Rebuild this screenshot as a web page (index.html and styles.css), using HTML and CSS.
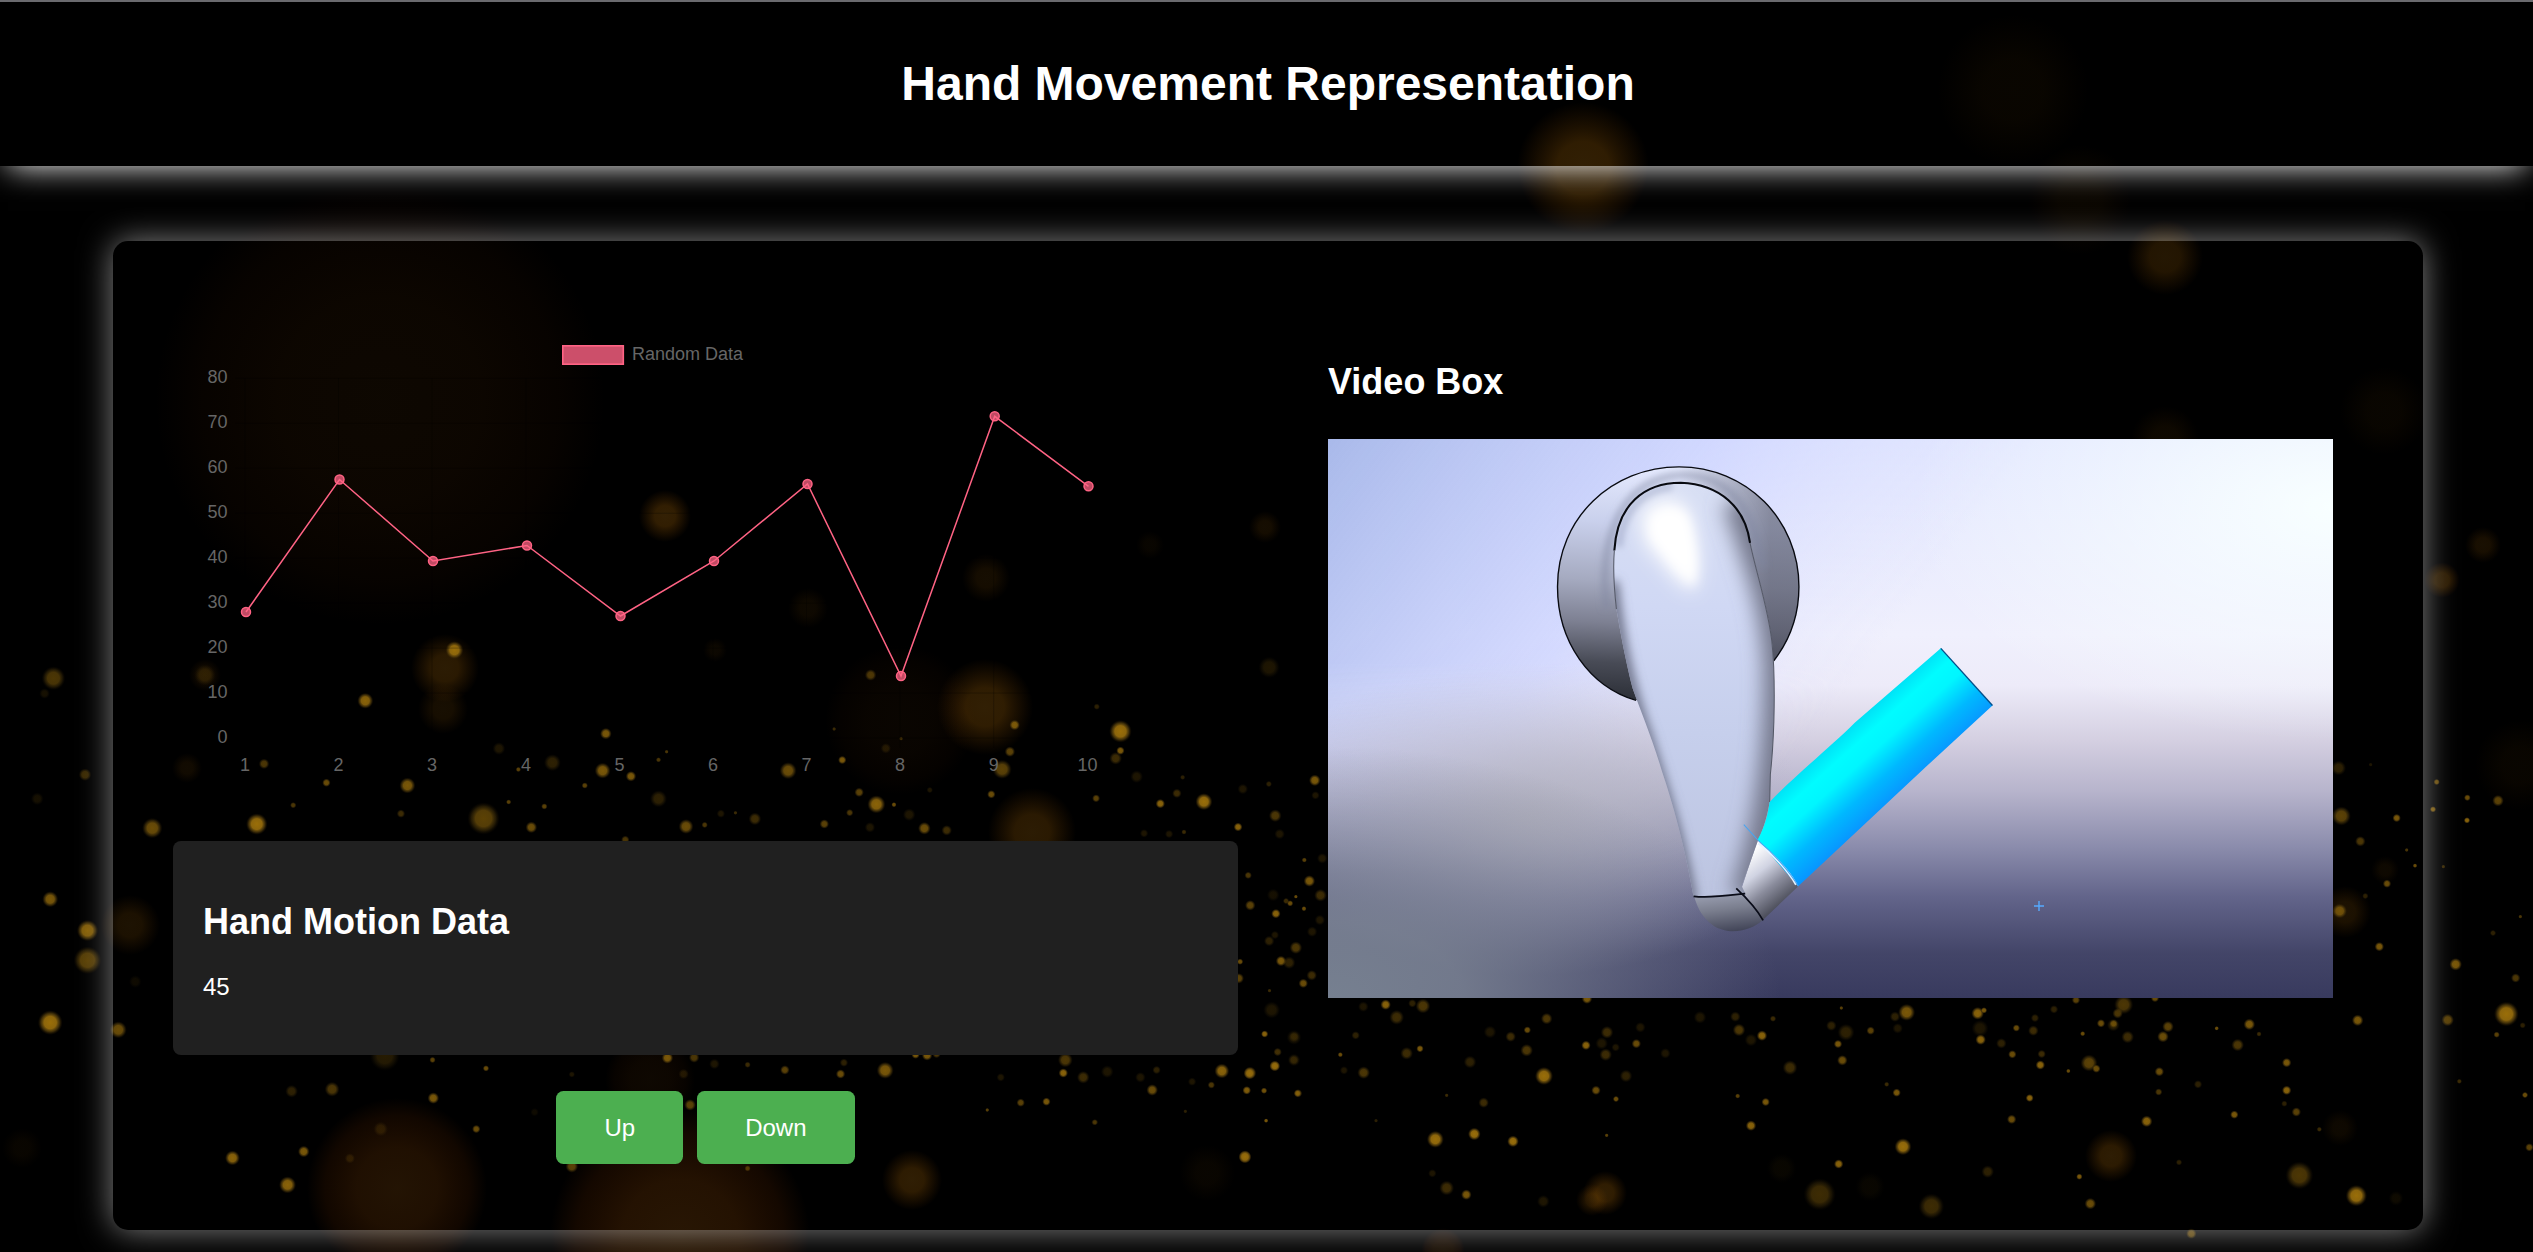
FILE: index.html
```html
<!DOCTYPE html>
<html lang="en">
<head>
<meta charset="utf-8">
<title>Hand Movement Representation</title>
<link rel="stylesheet" href="styles.css">
</head>
<body>
<svg class="bokeh" id="bokeh" viewBox="0 0 2533 1252" aria-hidden="true">
  <defs>
    <radialGradient id="gold"><stop offset="0" stop-color="#9a6e08"/><stop offset=".5" stop-color="#8c650c"/><stop offset=".75" stop-color="#5e450c" stop-opacity=".65"/><stop offset="1" stop-color="#2a1a02" stop-opacity="0"/></radialGradient>
    <radialGradient id="haze"><stop offset="0" stop-color="#b87510"/><stop offset=".4" stop-color="#b87008" stop-opacity=".95"/><stop offset=".7" stop-color="#a86004" stop-opacity=".5"/><stop offset="1" stop-color="#a05000" stop-opacity="0"/></radialGradient>
    <radialGradient id="ember"><stop offset="0" stop-color="#a05a10"/><stop offset=".45" stop-color="#a05008" stop-opacity=".9"/><stop offset=".8" stop-color="#a04000" stop-opacity=".5"/><stop offset="1" stop-color="#a04000" stop-opacity="0"/></radialGradient>
  </defs>
</svg>
<header class="header"><h1>Hand Movement Representation</h1></header>
<main class="container">
  <section class="left">
    <svg class="chart" id="chart" viewBox="173 323 1064 482">
      <g id="grid" stroke="#000" stroke-opacity=".25"></g>
      <rect x="562.8" y="345.8" width="60.5" height="18.4" fill="#ff6384" fill-opacity=".8" stroke="#ff6384" stroke-width="1.6"/>
      <text x="632" y="360">Random Data</text>
    </svg>
    <div class="data-box">
      <h2>Hand Motion Data</h2>
      <p>45</p>
    </div>
    <div class="buttons"><button>Up</button><button>Down</button></div>
  </section>
  <section class="right">
    <h2>Video Box</h2>
    <svg class="video" viewBox="1328 439 1005 559" preserveAspectRatio="none">
      <defs>
        <linearGradient id="sky" x1="0" y1="0" x2="0" y2="1"><stop offset="0" stop-color="#e2e7ff"/><stop offset=".35" stop-color="#f0f0fd"/><stop offset=".44" stop-color="#edebf9"/><stop offset=".54" stop-color="#d4cfe1"/><stop offset=".63" stop-color="#b7b4cc"/><stop offset=".73" stop-color="#8b8cac"/><stop offset=".82" stop-color="#62648a"/><stop offset=".92" stop-color="#434568"/><stop offset="1" stop-color="#383a5e"/></linearGradient>
        <linearGradient id="blue" x1="0" y1="0" x2=".6" y2=".25"><stop offset="0" stop-color="#a9b9ea"/><stop offset=".55" stop-color="#ccd3ff" stop-opacity=".75"/><stop offset="1" stop-color="#dfe2ff" stop-opacity="0"/></linearGradient>
        <linearGradient id="fade" x1="0" y1="0" x2="0" y2="1"><stop offset="0" stop-color="#fff"/><stop offset=".4" stop-color="#fff"/><stop offset=".78" stop-color="#000"/></linearGradient>
        <mask id="top"><rect x="1328" y="439" width="1005" height="559" fill="url(#fade)"/></mask>
        <radialGradient id="white" cx="1" cy=".12" r=".42"><stop offset="0" stop-color="#f8ffff"/><stop offset="1" stop-color="#f8ffff" stop-opacity="0"/></radialGradient>
        <radialGradient id="gray" cx="0" cy="1" r=".45"><stop offset="0" stop-color="#768090"/><stop offset=".3" stop-color="#7b8393" stop-opacity=".85"/><stop offset="1" stop-color="#7c8096" stop-opacity="0"/></radialGradient>
        <radialGradient id="mist" cx=".2" cy=".68" r=".28"><stop offset="0" stop-color="#b2b2bd" stop-opacity=".85"/><stop offset="1" stop-color="#b6b6c2" stop-opacity="0"/></radialGradient>
        <linearGradient id="disc" x1=".5" y1="0" x2=".45" y2="1"><stop offset="0" stop-color="#e6ebff"/><stop offset=".25" stop-color="#c9d0ec"/><stop offset=".5" stop-color="#a5aac0"/><stop offset=".68" stop-color="#7d8092"/><stop offset=".85" stop-color="#484b56"/><stop offset="1" stop-color="#2d3038"/></linearGradient>
        <linearGradient id="shade" x1="0" y1="0" x2="1" y2="0"><stop offset=".5" stop-color="#4a4c5c" stop-opacity="0"/><stop offset=".88" stop-color="#4a4c5c" stop-opacity=".55"/></linearGradient>
        <linearGradient id="arm" x1="0" y1="0" x2="0" y2="1"><stop offset="0" stop-color="#d8dff4"/><stop offset=".3" stop-color="#d0d8f4"/><stop offset=".6" stop-color="#c6cfec"/><stop offset="1" stop-color="#bcc4e0"/></linearGradient>
        <linearGradient id="cyan" gradientUnits="userSpaceOnUse" x1="960" y1="900" x2="1140" y2="1100"><stop offset="0" stop-color="#00dcf4"/><stop offset=".22" stop-color="#00fcff"/><stop offset=".4" stop-color="#00f6ff"/><stop offset=".68" stop-color="#00b8ff"/><stop offset="1" stop-color="#0a8cff"/></linearGradient>
        <linearGradient id="tipg" gradientUnits="userSpaceOnUse" x1="720" y1="1230" x2="830" y2="1370"><stop offset="0" stop-color="#fff"/><stop offset=".35" stop-color="#d0d3e2"/><stop offset=".65" stop-color="#8a8c9c"/><stop offset="1" stop-color="#4a4c58"/></linearGradient>
        <linearGradient id="ball" x1=".3" y1="0" x2=".5" y2="1"><stop offset="0" stop-color="#a4a9bc"/><stop offset=".5" stop-color="#7a7e8e"/><stop offset="1" stop-color="#44475a"/></linearGradient>
        <filter id="b30" filterUnits="userSpaceOnUse" x="100" y="0" width="900" height="1600"><feGaussianBlur stdDeviation="30"/></filter>
        <filter id="b18" filterUnits="userSpaceOnUse" x="100" y="0" width="900" height="1600"><feGaussianBlur stdDeviation="16"/></filter>
        <filter id="b8" filterUnits="userSpaceOnUse" x="100" y="0" width="900" height="1600"><feGaussianBlur stdDeviation="9"/></filter>
        <clipPath id="armclip"><path d="M332 350C340 215 420 153 525 153C640 158 712 225 726 325C745 420 780 520 790 620C800 720 798 880 785 1000L783 1080C775 1130 760 1170 748 1195L702 1325L712 1345L562 1355C535 1200 500 1080 470 990C440 890 410 820 385 750C360 650 345 560 338 520C330 450 328 400 332 350Z"/></clipPath>
      </defs>
      <rect x="1328" y="439" width="1005" height="559" fill="url(#sky)"/>
      <g mask="url(#top)"><rect x="1328" y="439" width="1005" height="559" fill="url(#blue)"/></g>
      <rect x="1328" y="439" width="1005" height="559" fill="url(#white)"/>
      <rect x="1328" y="439" width="1005" height="559" fill="url(#mist)"/>
      <rect x="1328" y="439" width="1005" height="559" fill="url(#gray)"/>
      <g transform="translate(1500 430) scale(.3444)">
        <path d="M395 785C260 745 167 615 167 455C167 255 325 107 520 107C715 107 868 260 868 455C868 540 840 612 795 670Z" fill="url(#disc)"/>
        <path d="M395 785C260 745 167 615 167 455C167 255 325 107 520 107C715 107 868 260 868 455C868 540 840 612 795 670Z" fill="url(#shade)"/>
        <path d="M310 520C285 340 340 140 530 130C680 135 735 240 765 400" fill="none" stroke="#7e86a0" stroke-opacity=".45" stroke-width="22" filter="url(#b8)"/>
        <path d="M395 785C260 745 167 615 167 455C167 255 325 107 520 107C715 107 868 260 868 455C868 540 840 612 795 670" fill="none" stroke="#080a10" stroke-width="4"/>
        <path d="M562 1350L690 1330L764 1422C720 1462 650 1468 608 1430C580 1405 572 1380 562 1350Z" fill="url(#ball)"/>
        <path d="M748 1190L866 1325L764 1422L700 1335Z" fill="url(#tipg)"/>
        <g clip-path="url(#armclip)">
          <rect x="320" y="150" width="490" height="1215" fill="url(#arm)"/>
          <path d="M700 200C770 400 815 520 820 700C822 900 800 1150 720 1360" fill="none" stroke="#74788c" stroke-width="110" filter="url(#b30)"/>
          <path d="M325 440C345 640 385 780 425 890C475 1050 525 1200 555 1370" fill="none" stroke="#666b80" stroke-width="34" filter="url(#b18)"/>
          <path d="M345 340C355 220 430 175 500 165" fill="none" stroke="#b4bcd8" stroke-width="22" filter="url(#b8)"/>
          <path d="M410 250C440 190 530 180 550 250C575 340 580 400 562 470C520 450 470 380 425 330Z" fill="#fff" filter="url(#b30)"/>
          <path d="M440 260C480 220 540 220 550 270C570 350 575 400 562 455C530 430 480 350 440 310Z" fill="#fff" filter="url(#b18)"/>
        </g>
        <path d="M332 350C340 215 420 153 525 153C640 158 712 225 726 328" fill="none" stroke="#080a10" stroke-width="6"/>
        <path d="M726 328C745 420 780 520 790 620C800 720 798 880 785 1000L783 1080M332 350C328 400 330 450 338 520" fill="none" stroke="#555967" stroke-width="3"/>
        <path d="M783 1080C860 1000 960 920 1030 850L1280 634L1430 800L1240 975L866 1325L748 1190C770 1150 778 1115 783 1080Z" fill="url(#cyan)"/>
        <path d="M1280 634L1430 800" stroke="#04508a" stroke-width="4"/>
        <path d="M750 1200C785 1225 835 1275 860 1320" fill="none" stroke="#e8f4ff" stroke-width="7"/>
        <path d="M708 1146L750 1192C790 1225 840 1280 866 1325" fill="none" stroke="#4aa4f0" stroke-width="3"/>
        <path d="M562 1354C610 1360 660 1352 712 1346M686 1331C715 1358 745 1390 764 1424" fill="none" stroke="#0a0c18" stroke-width="5"/>
      </g>
      <path d="M2034 906H2044M2039 901V911" stroke="#55aaff" stroke-width="1.4"/>
    </svg>
  </section>
</main>
<script src="app.js"></script>
</body>
</html>
```
FILE: styles.css
```css
* { box-sizing: border-box; }
body {
  margin: 0;
  height: 1252px;
  overflow: hidden;
  background: #000;
  color: #fff;
  font-family: Arial, "Liberation Sans", sans-serif;
  font-size: 24px;
}
.bokeh {
  position: absolute;
  inset: 0;
  width: 2533px;
  height: 1252px;
  z-index: -1;
}
.header {
  height: 166px;
  padding-bottom: 2px;
  border-top: 2px solid #6a6a6e;
  display: flex;
  align-items: center;
  justify-content: center;
  box-shadow: 0 8px 30px -8px #fff;
}
.header h1 { margin: 0; padding-left: 3px; font-size: 48px; line-height: 55px; }
h2 { margin: 0; font-size: 36px; line-height: 42px; }
.container {
  width: 2310px;
  height: 989px;
  margin: 75px 0 0 113px;
  padding: 82px 90px 65px 60px;
  display: grid;
  grid-template-columns: 1065px 1005px;
  justify-content: space-between;
  border-radius: 15px;
  box-shadow: 0 0 33px rgba(255, 255, 255, .52);
}
.left { display: flex; flex-direction: column; }
.chart { display: block; width: 1064px; height: 482px; }
.chart text { font-size: 18px; fill: #666; }
.data-box {
  height: 214px;
  margin-top: 36px;
  padding: 60px 30px 0;
  border-radius: 8px;
  background: #202020;
}
.data-box p { margin: 30px 0 0; line-height: 28px; }
.buttons {
  display: flex;
  justify-content: center;
  gap: 14px;
  margin-top: 36px;
}
button {
  height: 73px;
  padding: 0 48px;
  border: 0;
  border-radius: 7.5px;
  background: #4caf50;
  color: #fff;
  font: inherit;
}
.right { padding-top: 38px; }
.video { display: block; width: 1005px; height: 559px; margin-top: 36px; }
```
FILE: app.js
```js
const NS = 'http://www.w3.org/2000/svg';
function add(parent, tag, attrs, text) {
  const el = document.createElementNS(NS, tag);
  for (const k in attrs) el.setAttribute(k, attrs[k]);
  if (text) el.textContent = text;
  parent.appendChild(el);
}

// Line chart
const chart = document.getElementById('chart');
const grid = document.getElementById('grid');
const points = [[246,612],[339.5,479.5],[433,561],[527,545.5],[620.5,616],[714,561],[807.5,484],[901,676],[994.7,416.3],[1088.5,486.3]];
for (let i = 0; i <= 8; i++) {
  const y = 738 - i * 44.95;
  add(grid, 'line', {x1: 235, x2: 1088, y1: y, y2: y});
  add(chart, 'text', {x: 227.5, y: y + 5, 'text-anchor': 'end'}, String(i * 10));
}
points.forEach(([x], i) => {
  add(grid, 'line', {x1: x - 1, x2: x - 1, y1: 378, y2: 748});
  add(chart, 'text', {x: x - 1, y: 771, 'text-anchor': 'middle'}, String(i + 1));
});
add(chart, 'polyline', {points: points.join(' '), fill: 'none', stroke: '#ff6384', 'stroke-width': 1.5});
points.forEach(([x, y]) => add(chart, 'circle', {cx: x, cy: y, r: 4.5, fill: '#ff6384', 'fill-opacity': .75, stroke: '#ff6384', 'stroke-width': 1.5}));

// Out-of-focus lights: x, y, radius, opacity
const sky = document.getElementById('bokeh');
const lights = {
  ember: [[380,400,225,.085],[397,1188,90,.22],[680,1238,130,.25],[650,1080,45,.09],[900,720,75,.06],[1443,1250,22,.15]],
  haze: [[1583,168,66,.27],[2013,90,76,.05],[2080,200,55,.06],[2165,257,38,.2],[2165,440,34,.08],[2384,411,44,.05],[665,516,26,.28],[445,668,34,.24],[443,709,25,.13],[985,707,48,.27],[1032,832,44,.24],[912,1180,30,.26],[986,578,24,.12],[808,608,20,.08],[2442,580,18,.25],[2483,545,18,.14],[130,925,30,.16],[1207,1173,28,.05],[1265,527,16,.12],[2520,765,45,.05],[2345,912,26,.16],[2340,1128,18,.08],[2385,870,14,.08],[1605,1193,22,.27],[1592,1200,16,.2],[2111,1156,26,.25],[22,1148,20,.05],[1150,545,14,.05],[715,650,12,.07],[205,675,16,.12],[187,768,15,.1]]
};
for (const kind in lights) lights[kind].forEach(([cx, cy, r, opacity]) => add(sky, 'circle', {cx, cy, r, opacity, fill: `url(#${kind})`}));

// Sparks, per patch of the scene: x offset, y offset, x step, y step, [x, y, radius, strength]
const patches = [
  [1240,990,3,3,[[73,132,3,7],[30,249,6,9],[104,228,5,8],[20,301,4,6],[72,302,3,5],[174,310,4,7],[301,194,2.5,7],[78,392,2,5],[408,392,2,3],[15,501,6,10],[437,44,5,9],[549,48,7,5],[470,82,7,4],[371,248,6,5],[347,136,4,3],[540,176,3.5,8],[500,190,6,4],[162,142,7,2],[162,210,6,2],[113,186,4,2],[312,241,4,2],[586,448,8,10],[703,432,6,10],[819,454,5.5,10],[731,338,5,4],[620,316,2,4],[690,216,6,3],[620,594,7,4],[679,614,5,8],[912,258,8.5,10],[862,120,3.5,7],[812,140,5,4],[860,181,6,5],[920,86,5.5,5],[1041,26,5,8],[1038,166,4.5,9],[1101,127,6,4],[1097,194,6,4],[1068,301,4.5,7],[1128,327,3,7],[1189,161,4.5,7],[1201,112,5,2],[1158,258,6,3],[1276,190,5,2],[1100,436,2,6],[1533,407,5,9],[1497,120,6,5],[1493,318,2.5,6],[1533,150,6,2],[1380,82,6,2],[750,126,6,2],[910,634,6,2],[577,550,4,2],[95,60,8,2],[1085,160,6,2],[1127,172,4,2],[1486,80,5,3],[370,50,5,2],[517,40,4,3]]],
  [1760,990,3,3,[[6,137,5,9],[39,86,3,4],[90,233,7,4],[17,336,4,8],[244,54,2,6],[214,107,5,3],[258,127,8,3],[234,162,4,8],[247,211,5,7],[332,122,4,6],[440,67,8,8],[405,80,5,3],[413,115,5,2],[380,283,2.5,4],[410,308,4,8],[429,470,8,10],[236,522,4.5,9],[179,613,15,4],[514,649,12,4],[653,70,6,9],[672,61,3,8],[662,149,5,9],[769,114,3.5,7],[724,160,5,3],[757,193,4,7],[820,122,5,4],[841,225,4.5,9],[845,192,4,4],[809,324,3.8,9],[755,388,4.5,7],[925,243,2.2,7],[948,30,4,6],[968,131,2.5,7],[987,219,8,6],[1009,236,4,7],[1023,100,4,7],[1061,101,4,6],[1073,70,5,5],[1091,44,9,5],[1103,141,6,4],[1224,110,5.5,6],[1209,140,5.5,7],[1185,24,4,7],[1198,245,4.5,7],[1196,306,3.5,5],[1160,394,5.5,9],[958,560,3,8],[991,641,5.5,7],[683,545,6,3],[1257,517,3,3],[1314,283,4,3],[1370,115,2.2,7],[1433,165,6,5],[1468,103,5.5,8],[1497,132,2.5,4],[1423,374,4,8],[1294,731,5,6],[882,58,4,3],[825,84,4,3],[1060,105,6,3],[65,535,14,0.6],[330,590,14,0.6],[660,115,8,2]]],
  [2270,740,3,3,[[206,84,7,3],[302,74,2,2],[214,228,9,6],[380,234,4,8],[271,304,5,5],[410,330,2,5],[435,377,2.2,7],[351,431,4,7],[209,513,7,7],[286,468,3,3],[328,620,4.5,8],[263,841,5.5,8],[50,968,4.5,8],[50,1051,4.5,9],[43,1091,3,3],[79,1116,4.5,6],[148,1168,2.5,4],[88,1306,13,5],[259,1367,10,10],[378,1375,7,1],[500,126,3,7],[592,173,3.2,7],[684,182,5.5,6],[591,241,3,9],[489,208,3,8],[520,380,2,4],[751,530,2,5],[669,579,3,3],[557,673,6,8],[533,840,6,6],[737,714,4.5,5],[709,822,11.5,10],[680,884,3,6],[758,856,3,3],[568,1024,2.5,4],[765,1065,3,7],[778,1222,4,6]]],
  [800,640,2.9585,3,[[209,105,5.5,5],[101,267,2,4],[254,325,5,2],[299,296,2,4],[125,360,4,8],[635,255,5,8],[621,335,5,6],[598,388,9,6],[566,463,4,7],[878,200,3,3],[948,274,10.5,10],[948,332,4,8],[934,355,6,4],[175,457,4.5,6],[226,493,8.5,9],[278,494,2.5,7],[147,518,3.5,5],[72,552,4.5,6],[323,524,6,2],[368,565,6,7],[434,571,5,4],[207,562,5,2],[384,450,3,2],[876,475,3.8,6],[996,410,6,2],[1066,491,4.5,9],[1115,460,4.5,4],[1132,412,2.5,3],[1195,485,8,10],[1136,576,2.5,4],[1092,582,4,2],[1018,580,4,2],[1296,561,4.2,9],[1310,447,5,2],[1387,432,3,3],[1406,527,6,5],[1523,421,5.5,8],[1525,466,4,2],[1419,582,5,2],[1388,82,10,2],[1492,660,2.5,6],[1507,723,5.5,8],[1326,706,3.5,5],[1332,796,5,6],[1408,821,4.5,9],[1450,790,3,7],[1467,770,2,7],[1438,783,3,4],[1491,806,2.5,7],[1540,766,6,4],[1467,923,6,5],[1388,903,5,3],[1405,885,4,2],[1423,963,5,8],[1447,968,6,3],[1302,965,3,7],[1298,1015,5,6],[1514,1006,5,4],[1489,1030,4.5,7],[1389,1052,2,4],[1375,1182,3.5,7],[1462,1190,5,2],[1405,1278,5,9],[1413,1236,4,3],[1461,1260,5,2],[1330,1300,5.5,9],[1248,1293,7,9],[1217,1335,3.5,5],[1322,1351,4,6],[1373,1352,3,5],[1472,1360,3.5,6],[1379,1442,2.2,6],[1042,1350,5.5,7],[1007,1312,5,2],[1055,1290,4,3],[1160,1325,4,2],[909,1295,6,2],[838,1312,6,4],[779,1299,4.5,9],[785,1260,7,5],[729,1385,4,8],[653,1388,4,6],[554,1410,2,6],[871,1447,3,3],[594,1312,4,2],[252,1291,8,8],[120,1302,4.5,7],[130,1268,4,3],[342,1244,4,8],[376,1246,5,8],[404,1242,4,5],[1140,1414,2,3],[1538,840,5,2],[1515,875,5,2],[1545,655,5,2],[1400,765,6,1.5]]],
  [0,622,1.2346,2.489,[[66,140,11,5],[105,380,6,4],[46,440,6,1.5],[62,690,7.5,8],[108,768,10,9],[108,842,13,6],[62,997,11.5,10],[146,1015,8,7],[167,895,6,1],[188,513,9.5,7],[253,132,10,2],[317,503,10,10],[403,400,4,7],[451,196,7.5,9],[561,70,8.5,10],[326,353,5,5],[503,407,7.5,8],[362,456,3,5],[495,477,4,4],[748,278,5.5,8],[616,315,6,2],[682,350,8,3],[640,367,2.5,6],[744,370,7.5,8],[779,384,5,8],[722,407,3,6],[823,323,2,5],[813,343,2.5,5],[628,448,2.5,6],[672,459,3,6],[597,489,15,6],[656,511,5.5,7],[813,440,8,3],[847,509,7,7],[870,505,3,5],[932,490,6,4],[973,370,8,7],[908,475,2,4],[890,477,4,2],[475,1080,14,2.5],[534,1090,3,6],[600,1111,3,7],[360,1168,6,3],[410,1163,7,5],[535,1185,5.5,8],[470,1262,7,2],[588,1262,4,7],[287,1334,7,9],[375,1318,5.5,8],[355,1401,8,9],[432,1335,5,2],[852,1202,5.5,6],[706,1355,6,6],[923,1360,3,5],[824,1085,5.5,8],[857,1084,5,5],[882,1100,5,2],[923,1102,3,4],[969,1115,4.5,6],[844,1125,5,2],[706,1126,3,2],[1537,1331,6,9],[1352,1245,3,3],[55,178,5,1.5],[772,542,4,5],[660,1220,4,1]]]
];
for (const [x, y, sx, sy, sparks] of patches) {
  for (const [px, py, r, strength] of sparks) {
    add(sky, 'circle', {cx: x + px / sx, cy: y + py / sy, r: r * 1.08, opacity: strength / 10, fill: 'url(#gold)'});
  }
}
```
